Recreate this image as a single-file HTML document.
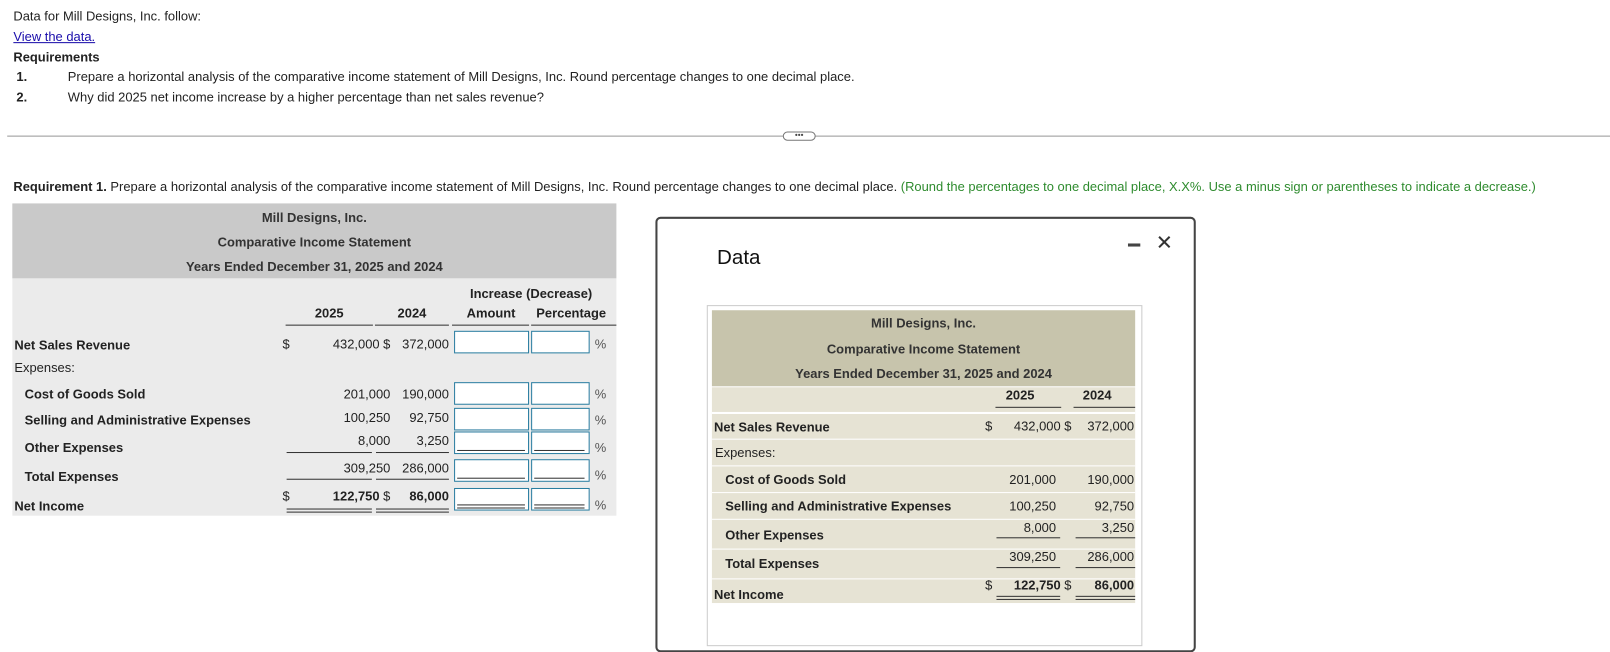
<!DOCTYPE html><html><head><style>
body{margin:0;width:1610px;height:611px;position:relative;overflow:hidden;background:#fff;font-family:"Liberation Sans",Arial,sans-serif;font-size:12.6px;color:#222}
#w{position:absolute;left:0;top:0;width:1568px;height:600px;transform:scale(1.0273);transform-origin:0 0}
.a{position:absolute;white-space:nowrap;line-height:14px}
.r{text-align:right}
.b{font-weight:bold}
.ln{position:absolute;height:1px;background:#333}
.box{position:absolute;border:1px solid #2a7da0;background:#fff;height:20px}
.c{text-align:center}
</style></head><body><div id="w">
<div class="a" style="left:13px;top:9px">Data for Mill Designs, Inc. follow:</div>
<div class="a" style="left:13px;top:29px;color:#1a0dab;text-decoration:underline">View the data.</div>
<div class="a b" style="left:13px;top:49px">Requirements</div>
<div class="a b" style="left:16px;top:68px">1.</div>
<div class="a" style="left:66px;top:68px">Prepare a horizontal analysis of the comparative income statement of Mill Designs, Inc. Round percentage changes to one decimal place.</div>
<div class="a b" style="left:16px;top:88px">2.</div>
<div class="a" style="left:66px;top:88px">Why did 2025 net income increase by a higher percentage than net sales revenue?</div>
<div style="position:absolute;left:7px;top:132px;width:1561px;height:1px;background:#999"></div>
<div style="position:absolute;left:762px;top:128px;width:30px;height:7px;border:1px solid #777;border-radius:5px;background:#fff;font-size:8px;line-height:6px;text-align:center;color:#444">•••</div>
<div class="a" style="left:13px;top:175px"><b>Requirement 1.</b> Prepare a horizontal analysis of the comparative income statement of Mill Designs, Inc. Round percentage changes to one decimal place. <span style="color:#2e8b2e">(Round the percentages to one decimal place, X.X%. Use a minus sign or parentheses to indicate a decrease.)</span></div>

<div style="position:absolute;left:12px;top:198px;width:588px;height:73px;background:#c9c9c9"></div>
<div style="position:absolute;left:12px;top:271px;width:588px;height:231px;background:#ebebeb"></div>
<div class="a b c" style="left:12px;width:588px;top:205px;color:#333">Mill Designs, Inc.</div>
<div class="a b c" style="left:12px;width:588px;top:229px;color:#333">Comparative Income Statement</div>
<div class="a b c" style="left:12px;width:588px;top:253px;color:#333">Years Ended December 31, 2025 and 2024</div>
<div class="a b c" style="left:442px;width:150px;top:279px">Increase (Decrease)</div>
<div class="a b c" style="left:278px;width:85px;top:298px">2025</div>
<div class="a b c" style="left:365px;width:72px;top:298px">2024</div>
<div class="a b c" style="left:442px;width:72px;top:298px">Amount</div>
<div class="a b c" style="left:517px;width:78px;top:298px">Percentage</div>
<div class="ln" style="left:278px;top:316px;width:85px"></div>
<div class="ln" style="left:365px;top:316px;width:72px"></div>
<div class="ln" style="left:440px;top:316px;width:75px"></div>
<div class="ln" style="left:517px;top:316px;width:83px"></div>

<div class="a b" style="left:14px;top:329px">Net Sales Revenue</div>
<div class="a" style="left:14px;top:351px">Expenses:</div>
<div class="a b" style="left:24px;top:377px">Cost of Goods Sold</div>
<div class="a b" style="left:24px;top:402px">Selling and Administrative Expenses</div>
<div class="a b" style="left:24px;top:429px">Other Expenses</div>
<div class="a b" style="left:24px;top:457px">Total Expenses</div>
<div class="a b" style="left:14px;top:486px">Net Income</div>

<div class="a" style="left:275px;top:328px">$</div>
<div class="a r" style="left:290px;width:90px;top:328px">432,000 $</div>
<div class="a r" style="left:370px;width:67px;top:328px">372,000</div>
<div class="a r" style="left:290px;width:90px;top:377px">201,000</div>
<div class="a r" style="left:370px;width:67px;top:377px">190,000</div>
<div class="a r" style="left:290px;width:90px;top:400px">100,250</div>
<div class="a r" style="left:370px;width:67px;top:400px">92,750</div>
<div class="a r" style="left:290px;width:90px;top:422px">8,000</div>
<div class="a r" style="left:370px;width:67px;top:422px">3,250</div>
<div class="ln" style="left:279px;top:440px;width:83px"></div>
<div class="ln" style="left:366px;top:440px;width:71px"></div>
<div class="a r" style="left:290px;width:90px;top:449px">309,250</div>
<div class="a r" style="left:370px;width:67px;top:449px">286,000</div>
<div class="ln" style="left:279px;top:466px;width:83px"></div>
<div class="ln" style="left:366px;top:466px;width:71px"></div>
<div class="a" style="left:275px;top:476px">$</div>
<div class="a r b" style="left:290px;width:90px;top:476px">122,750 <span style="font-weight:normal">$</span></div>
<div class="a r b" style="left:370px;width:67px;top:476px">86,000</div>
<div class="ln" style="left:279px;top:495px;width:83px"></div>
<div class="ln" style="left:279px;top:498px;width:83px"></div>
<div class="ln" style="left:366px;top:495px;width:71px"></div>
<div class="ln" style="left:366px;top:498px;width:71px"></div>

<div class="box" style="left:442px;top:322px;width:71px"></div><div class="box" style="left:517px;top:322px;width:55px"></div><div class="a" style="left:579px;top:328px;color:#555">%</div>
<div class="box" style="left:442px;top:372px;width:71px"></div><div class="box" style="left:517px;top:372px;width:55px"></div><div class="a" style="left:579px;top:377px;color:#555">%</div>
<div class="box" style="left:442px;top:397px;width:71px"></div><div class="box" style="left:517px;top:397px;width:55px"></div><div class="a" style="left:579px;top:402px;color:#555">%</div>
<div class="box" style="left:442px;top:420px;width:71px"></div><div class="box" style="left:517px;top:420px;width:55px"></div><div class="a" style="left:579px;top:429px;color:#555">%</div>
<div class="ln" style="left:445px;top:438px;width:66px"></div><div class="ln" style="left:520px;top:438px;width:49px"></div>
<div class="box" style="left:442px;top:447px;width:71px"></div><div class="box" style="left:517px;top:447px;width:55px"></div><div class="a" style="left:579px;top:456px;color:#555">%</div>
<div class="ln" style="left:445px;top:465px;width:66px"></div><div class="ln" style="left:520px;top:465px;width:49px"></div>
<div class="box" style="left:442px;top:475px;width:71px"></div><div class="box" style="left:517px;top:475px;width:55px"></div><div class="a" style="left:579px;top:485px;color:#555">%</div>
<div class="ln" style="left:445px;top:491px;width:66px"></div><div class="ln" style="left:445px;top:494px;width:66px"></div>
<div class="ln" style="left:520px;top:491px;width:49px"></div><div class="ln" style="left:520px;top:494px;width:49px"></div>

<div style="position:absolute;left:638px;top:211px;width:522px;height:420px;border:2px solid #444;border-radius:5px;background:#fff"></div>
<div class="a" style="left:698px;top:240px;font-size:20px;line-height:22px;color:#111">Data</div>
<div style="position:absolute;left:1098px;top:237px;width:12px;height:3px;background:#444"></div>
<div class="a" style="left:1125px;top:226px;font-size:20px;line-height:22px;color:#333">✕</div>
<div style="position:absolute;left:688px;top:297px;width:422px;height:330px;border:1px solid #ccc"></div>
<div style="position:absolute;left:693px;top:302px;width:412px;height:74px;background:#c7c4ac"></div>
<div class="a b c" style="left:693px;width:412px;top:308px;color:#333">Mill Designs, Inc.</div>
<div class="a b c" style="left:693px;width:412px;top:333px;color:#333">Comparative Income Statement</div>
<div class="a b c" style="left:693px;width:412px;top:357px;color:#333">Years Ended December 31, 2025 and 2024</div>
<div style="position:absolute;left:693px;top:377px;width:412px;height:210px;background:#e6e3d4"></div>
<div style="position:absolute;left:693px;top:401px;width:412px;height:2px;background:#fff"></div>
<div style="position:absolute;left:693px;top:427px;width:412px;height:1px;background:#fff"></div>
<div style="position:absolute;left:693px;top:453px;width:412px;height:1px;background:#fff"></div>
<div style="position:absolute;left:693px;top:479px;width:412px;height:1px;background:#fff"></div>
<div style="position:absolute;left:693px;top:505px;width:412px;height:1px;background:#fff"></div>
<div style="position:absolute;left:693px;top:534px;width:412px;height:1px;background:#fff"></div>
<div style="position:absolute;left:693px;top:563px;width:412px;height:1px;background:#fff"></div>
<div class="a b c" style="left:969px;width:48px;top:378px">2025</div>
<div class="a b c" style="left:1044px;width:48px;top:378px">2024</div>
<div class="ln" style="left:969px;top:396px;width:64px"></div>
<div class="ln" style="left:1045px;top:396px;width:60px"></div>
<div class="a b" style="left:695px;top:409px">Net Sales Revenue</div>
<div class="a" style="left:696px;top:434px">Expenses:</div>
<div class="a b" style="left:706px;top:460px">Cost of Goods Sold</div>
<div class="a b" style="left:706px;top:486px">Selling and Administrative Expenses</div>
<div class="a b" style="left:706px;top:514px">Other Expenses</div>
<div class="a b" style="left:706px;top:542px">Total Expenses</div>
<div class="a b" style="left:695px;top:572px">Net Income</div>
<div class="a" style="left:959px;top:408px">$</div>
<div class="a r" style="left:960px;width:83px;top:408px">432,000 $</div>
<div class="a r" style="left:1040px;width:64px;top:408px">372,000</div>
<div class="a r" style="left:960px;width:68px;top:460px">201,000</div>
<div class="a r" style="left:1040px;width:64px;top:460px">190,000</div>
<div class="a r" style="left:960px;width:68px;top:486px">100,250</div>
<div class="a r" style="left:1040px;width:64px;top:486px">92,750</div>
<div class="a r" style="left:960px;width:68px;top:507px">8,000</div>
<div class="a r" style="left:1040px;width:64px;top:507px">3,250</div>
<div class="ln" style="left:970px;top:523px;width:62px"></div><div class="ln" style="left:1047px;top:523px;width:58px"></div>
<div class="a r" style="left:960px;width:68px;top:535px">309,250</div>
<div class="a r" style="left:1040px;width:64px;top:535px">286,000</div>
<div class="ln" style="left:970px;top:552px;width:62px"></div><div class="ln" style="left:1047px;top:552px;width:58px"></div>
<div class="a" style="left:959px;top:563px">$</div>
<div class="a r b" style="left:960px;width:83px;top:563px">122,750 <span style="font-weight:normal">$</span></div>
<div class="a r b" style="left:1040px;width:64px;top:563px">86,000</div>
<div class="ln" style="left:970px;top:580px;width:62px"></div><div class="ln" style="left:970px;top:583px;width:62px"></div>
<div class="ln" style="left:1047px;top:580px;width:58px"></div><div class="ln" style="left:1047px;top:583px;width:58px"></div>
</div></body></html>
